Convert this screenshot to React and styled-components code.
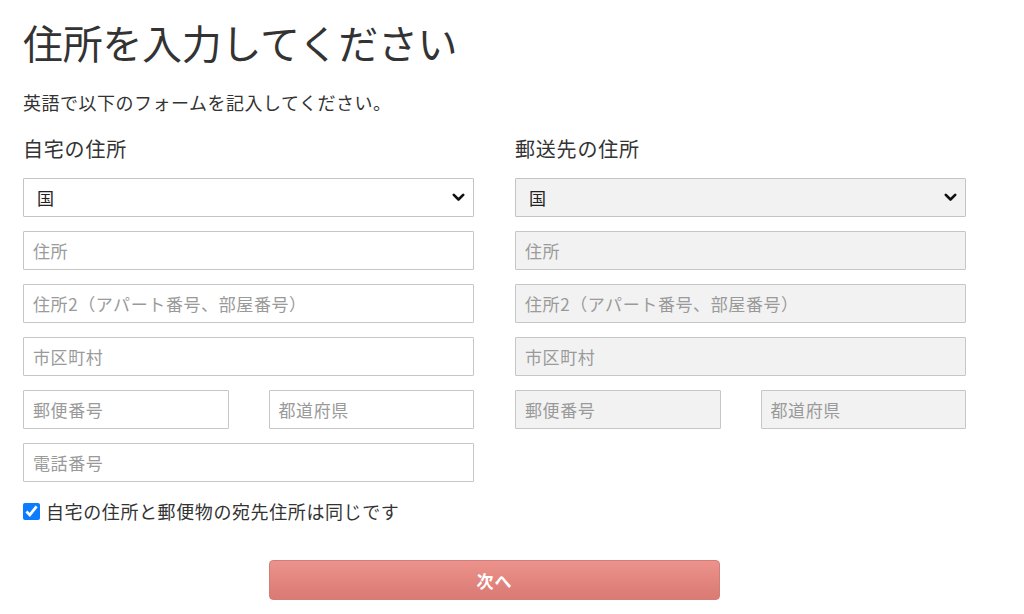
import React from "react";
import styled, { createGlobalStyle } from "styled-components";

const GlobalStyle = createGlobalStyle`
  html, body {
    margin: 0;
    padding: 0;
    background: #fff;
  }
  body {
    font-family: "Noto Sans CJK JP", "Noto Sans", sans-serif;
    color: #333;
  }
`;

const Page = styled.main`
  width: 943px;
  margin-left: 23px;
  padding-top: 14px;
`;

const Title = styled.h1`
  margin: 0;
  font-size: 40px;
  font-weight: 400;
  line-height: 56px;
  letter-spacing: -0.3px;
  color: #333;
`;

const Lead = styled.p`
  margin: 20px 0 0;
  font-size: 18px;
  line-height: 24px;
  letter-spacing: 0.5px;
  color: #333;
`;

const Columns = styled.div`
  display: grid;
  grid-template-columns: 451px 451px;
  column-gap: 41px;
  margin-top: 21px;
`;

const Column = styled.section`
  display: flex;
  flex-direction: column;
`;

const Heading = styled.h2`
  margin: 0 0 15px;
  font-size: 20px;
  font-weight: 400;
  line-height: 28px;
  letter-spacing: 0.8px;
  color: #333;
`;

const Fields = styled.div`
  display: flex;
  flex-direction: column;
  gap: 14px;
`;

const Pair = styled.div`
  display: grid;
  grid-template-columns: 1fr 1fr;
  column-gap: 40px;
`;

const Input = styled.input`
  box-sizing: border-box;
  width: 100%;
  height: 39px;
  margin: 0;
  padding: 0 9px;
  border: 1px solid #c6c6c6;
  border-radius: 1px;
  background: ${(p) => (p.$muted ? "#f2f2f2" : "#fff")};
  font-family: inherit;
  font-size: 17px;
  letter-spacing: 0.6px;
  color: #333;
  outline: none;
  &::placeholder {
    color: #9a9a9a;
  }
`;

const SelectBox = styled.div`
  height: 39px;
  box-sizing: border-box;
  border: 1px solid #c4c4c4;
  border-radius: 1px;
  background: ${(p) => (p.$muted ? "#f2f2f2" : "#fff")};
  display: flex;
  align-items: center;
  justify-content: space-between;
  padding: 0 8px 0 13px;
  font-size: 17px;
  color: #222;
`;

const CheckRow = styled.label`
  display: flex;
  align-items: center;
  gap: 6px;
  margin-top: 16px;
  font-size: 18px;
  line-height: 26px;
  color: #333;
  letter-spacing: 0.6px;
`;

const Check = styled.input`
  width: 17px;
  height: 17px;
  margin: 0;
  accent-color: #0b7bff;
`;

const Actions = styled.div`
  display: flex;
  justify-content: center;
  margin-top: 36px;
`;

const NextButton = styled.button`
  width: 451px;
  height: 40px;
  border: 1px solid #d27d77;
  border-radius: 4px;
  background: linear-gradient(#ec928c, #d97a73);
  color: #fff;
  font-family: inherit;
  font-size: 17px;
  font-weight: 700;
  letter-spacing: 1px;
  cursor: pointer;
`;

function Chevron() {
  return (
    <svg width="13" height="9" viewBox="0 0 13 9" aria-hidden="true">
      <path
        d="M1.8 1.8 L6.5 6.5 L11.2 1.8"
        fill="none"
        stroke="#111"
        strokeWidth="2.6"
        strokeLinecap="round"
        strokeLinejoin="round"
      />
    </svg>
  );
}

function AddressColumn({ heading, muted }) {
  return (
    <Column>
      <Heading>{heading}</Heading>
      <Fields>
        <SelectBox $muted={muted}>
          <span>国</span>
          <Chevron />
        </SelectBox>
        <Input $muted={muted} placeholder="住所" />
        <Input $muted={muted} placeholder="住所2（アパート番号、部屋番号）" />
        <Input $muted={muted} placeholder="市区町村" />
        <Pair>
          <Input $muted={muted} placeholder="郵便番号" />
          <Input $muted={muted} placeholder="都道府県" />
        </Pair>
        {!muted && <Input placeholder="電話番号" />}
      </Fields>
    </Column>
  );
}

export default function App() {
  return (
    <Page>
      <GlobalStyle />
      <Title>住所を入力してください</Title>
      <Lead>英語で以下のフォームを記入してください。</Lead>
      <Columns>
        <AddressColumn heading="自宅の住所" />
        <AddressColumn heading="郵送先の住所" muted />
      </Columns>
      <CheckRow>
        <Check type="checkbox" defaultChecked />
        自宅の住所と郵便物の宛先住所は同じです
      </CheckRow>
      <Actions>
        <NextButton>次へ</NextButton>
      </Actions>
    </Page>
  );
}
